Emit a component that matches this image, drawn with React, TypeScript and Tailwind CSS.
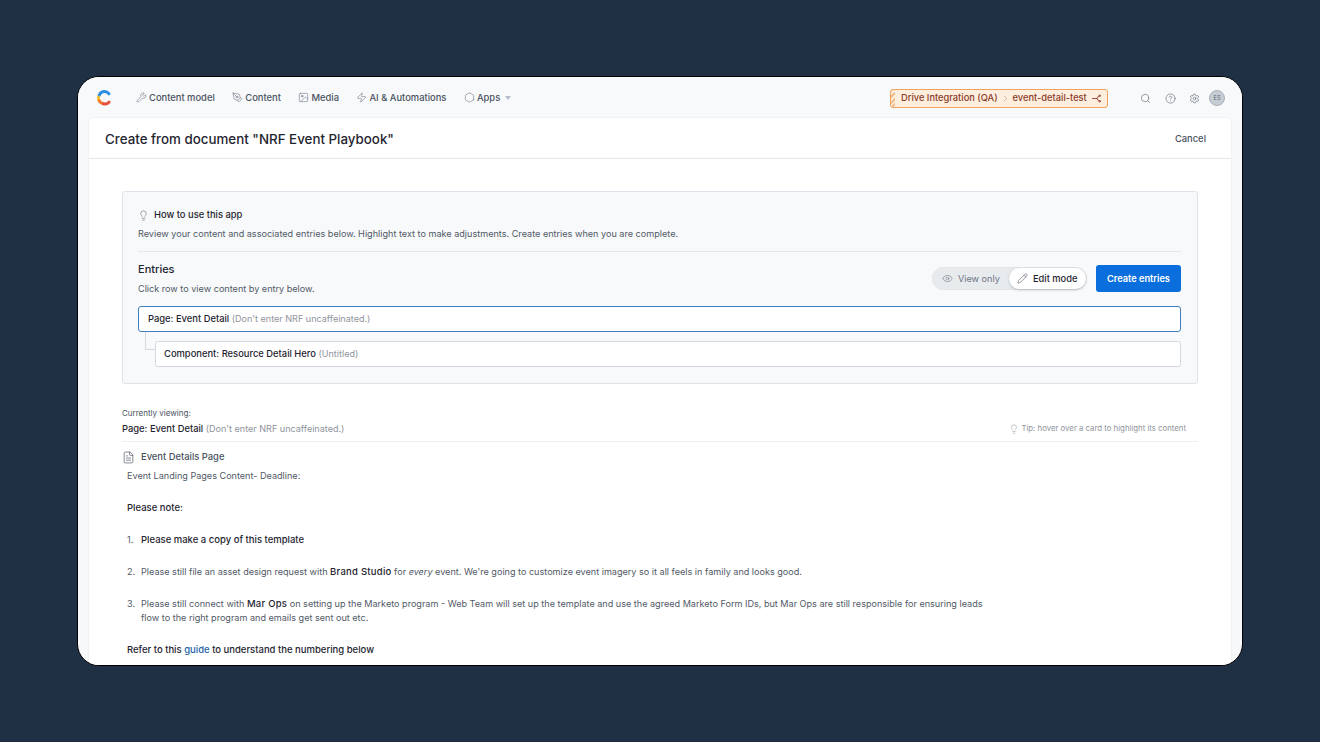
import { Search, CircleHelp, Settings, Eye, Pencil, Lightbulb, FileText, Wrench, PenTool, Image, Zap, Hexagon, ChevronRight } from 'lucide-react'

const NAV_ITEMS = [
  { label: 'Content model', icon: Wrench },
  { label: 'Content', icon: PenTool },
  { label: 'Media', icon: Image },
  { label: 'AI & Automations', icon: Zap },
  { label: 'Apps', icon: Hexagon },
]

function Logo() {
  return (
    <svg width="16" height="16" viewBox="0 0 16 16" fill="none" strokeWidth="3" strokeLinecap="round">
      <path d="M3.2 5.2A5.6 5.6 0 0 0 3.2 10.8" stroke="#f6c42f" />
      <path d="M3.2 10.8A5.6 5.6 0 0 0 7.5 13.7" stroke="#ee7a35" />
      <path d="M7.5 13.7A5.6 5.6 0 0 0 13 12.2" stroke="#e8503f" />
      <path d="M3.4 4.9A5.6 5.6 0 0 1 13 3.8" stroke="#2f8fe0" />
    </svg>
  )
}

function BranchIcon() {
  return (
    <svg width="9" height="9" viewBox="0 0 9 9" fill="none" stroke="currentColor" strokeWidth="0.9" strokeLinecap="round">
      <path d="M0.5 4.5H5L6.5 2.2M5 4.5L6.5 6.8" />
      <circle cx="7.6" cy="1.8" r="0.7" />
      <circle cx="7.6" cy="7.2" r="0.7" />
    </svg>
  )
}

function TopBar() {
  return (
    <div className="h-[41px] shrink-0 flex items-center pt-[1px] pl-[18px] pr-[17px] bg-[#f7f9fa]">
      <Logo />
      <nav className="flex items-center ml-[24px] gap-[17.5px]">
        {NAV_ITEMS.map((item) => (
          <div key={item.label} className="flex items-center gap-[2px] text-[#4a5260]">
            <item.icon className="w-[11px] h-[11px] text-[#6b7483]" strokeWidth={1.25} />
            <span className="text-[9.4px] font-medium">{item.label}</span>
            {item.label === 'Apps' && (
              <span className="ml-[3px] w-0 h-0 border-x-[3px] border-x-transparent border-t-[4px] border-t-[#b5bdc9]" />
            )}
          </div>
        ))}
      </nav>
      <div className="ml-auto flex items-center">
        <div className="h-[19px] w-[218px] flex items-center rounded-[3px] border border-[#f1a25d] bg-[#fdeedd] pr-[6px] text-[#8c3a2a] text-[9.3px] font-medium mr-[32px] overflow-hidden">
          <span className="w-[4px] h-full mr-[6px] bg-[repeating-linear-gradient(135deg,#f5bd8b_0_2px,#fdeedd_2px_4px)]" />
          <span>Drive Integration (QA)</span>
          <ChevronRight className="w-[9px] h-[9px] mx-[3px] text-[#a8705a]" strokeWidth={1.25} />
          <span>event-detail-test</span>
          <span className="ml-auto">
            <BranchIcon />
          </span>
        </div>
        <Search className="w-[11px] h-[11px] text-[#555d6b]" strokeWidth={1.25} />
        <CircleHelp className="w-[11px] h-[11px] text-[#555d6b] ml-[14px]" strokeWidth={1.25} />
        <Settings className="w-[11px] h-[11px] text-[#555d6b] ml-[13px]" strokeWidth={1.25} />
        <div className="ml-[9px] w-[16px] h-[16px] rounded-full bg-[#c6ccd4] border border-[#a9b1bc] flex items-center justify-center text-[5.5px] text-[#5d6878]">
          ES
        </div>
      </div>
    </div>
  )
}

function EntryLabel({ name, title }: { name: string; title: string }) {
  return (
    <span className="text-[9.4px] font-medium text-[#1f2530]">
      {name} <span className="text-[9.05px] font-normal text-[#8f949c]">({title})</span>
    </span>
  )
}

function HowToPanel() {
  return (
    <div className="h-[193px] border border-[#dfe3e9] rounded-[3px] bg-[#f7f9fa] pt-[16px] pl-[15px] pr-[16px]">
      <div className="flex items-center h-[14px] gap-[5px] text-[9.4px] font-medium text-[#1f2530]">
        <Lightbulb className="w-[11px] h-[11px] text-[#5d6570]" strokeWidth={1.25} />
        <span>How to use this app</span>
      </div>
      <p className="mt-[5px] h-[14px] leading-[14px] text-[9.1px] text-[#525a66]">
        Review your content and associated entries below. Highlight text to make adjustments. Create entries when you are complete.
      </p>
      <div className="mt-[10px] border-t border-[#e3e6ea]" />
      <div className="flex items-start justify-between mt-[9px]">
        <div>
          <div className="text-[11px] leading-[16px] font-medium text-[#1f2530]">Entries</div>
          <div className="mt-[5px] text-[9.1px] leading-[14px] text-[#525a66]">Click row to view content by entry below.</div>
        </div>
        <div className="flex items-center gap-[9px] mt-[4px]">
          <div className="h-[23px] w-[155px] flex items-center rounded-full bg-[#e8ebee] border border-[#e1e4e8]">
            <div className="flex items-center gap-[5px] pl-[9px] text-[9.1px] text-[#6b7483] w-[76px]">
              <Eye className="w-[11px] h-[11px]" strokeWidth={1.25} />
              View only
            </div>
            <div className="h-[21px] flex-1 flex items-center gap-[5px] pl-[8px] rounded-full bg-white shadow-[0_1px_3px_rgba(0,0,0,0.2)] text-[9.3px] font-medium text-[#1f2530]">
              <Pencil className="w-[11px] h-[11px] text-[#4a5260]" strokeWidth={1.25} />
              Edit mode
            </div>
          </div>
          <button className="h-[27px] w-[85px] rounded-[3px] bg-[#0a6fdc] text-white text-[9.2px] font-semibold">
            Create entries
          </button>
        </div>
      </div>
      <div className="mt-[10px] h-[26px] flex items-center pt-[1px] px-[9px] rounded-[3px] bg-white border-[1.5px] border-[#3f7fc0]">
        <EntryLabel name="Page: Event Detail" title="Don't enter NRF uncaffeinated." />
      </div>
      <div className="flex mt-[9px]">
        <div className="w-[10px] h-[18px] -mt-[9px] ml-[7px] border-l border-b border-[#d5d9df] shrink-0" />
        <div className="flex-1 h-[26px] flex items-center pt-[1px] px-[8px] rounded-[3px] bg-white border border-[#d5d9df]">
          <EntryLabel name="Component: Resource Detail Hero" title="Untitled" />
        </div>
      </div>
    </div>
  )
}

function DocumentBody() {
  return (
    <div className="pl-[5px] text-[9.08px] leading-[14px] text-[#525a66] w-[870px]">
      <p className="mt-[5px]">Event Landing Pages Content- Deadline:</p>
      <p className="mt-[18px] text-[9.5px] font-medium text-[#1f2530]">Please note:</p>
      <ol className="mt-[18px]">
        <li className="flex">
          <span className="w-[14px] shrink-0">1.</span>
          <span className="text-[9.5px] font-medium text-[#1f2530]">Please make a copy of this template</span>
        </li>
        <li className="flex mt-[18px]">
          <span className="w-[14px] shrink-0">2.</span>
          <span>
            Please still file an asset design request with <b className="text-[9.5px] tracking-[0.25px] font-medium text-[#1f2530]">Brand Studio</b> for <i>every</i> event. We're going to customize event imagery so it all feels in family and looks good.
          </span>
        </li>
        <li className="flex mt-[18px]">
          <span className="w-[14px] shrink-0">3.</span>
          <span>
            Please still connect with <b className="text-[9.5px] tracking-[0.25px] font-medium text-[#1f2530]">Mar Ops</b> on setting up the Marketo program - Web Team will set up the template and use the agreed Marketo Form IDs, but Mar Ops are still responsible for ensuring leads flow to the right program and emails get sent out etc.
          </span>
        </li>
      </ol>
      <p className="mt-[18px] text-[9.5px] font-medium text-[#1f2530]">
        Refer to this <span className="text-[#1c5fa8]">guide</span> to understand the numbering below
      </p>
    </div>
  )
}

export default function App() {
  return (
    <div className="w-[1320px] h-[742px] bg-[#1f3044] pt-[76px] pl-[77px] font-['Inter',sans-serif]">
      <div className="w-[1166px] h-[590px] rounded-[22px] overflow-hidden bg-[#f7f9fa] border border-black flex flex-col">
        <TopBar />
        <div className="flex-1 mx-[11px] bg-white rounded-t-[4px] shadow-[0_0_3px_rgba(0,0,0,0.08)] overflow-hidden">
          <div className="h-[41px] flex items-center justify-between pt-[2px] pl-[16px] pr-[25px] border-b border-[#e3e6ea]">
            <h1 className="text-[13.35px] font-medium text-[#1f2530]">Create from document "NRF Event Playbook"</h1>
            <span className="mt-[1px] text-[9.4px] font-medium text-[#4a5260]">Cancel</span>
          </div>
          <div className="pt-[32px] px-[33px]">
            <HowToPanel />
            <div className="mt-[23px] text-[8px] leading-[12px] text-[#4a5260]">Currently viewing:</div>
            <div className="mt-[3px] flex items-center justify-between pr-[12px] pb-[5px] border-b border-[#eef0f3]">
              <EntryLabel name="Page: Event Detail" title="Don't enter NRF uncaffeinated." />
              <div className="flex items-center gap-[2px] text-[7.8px] text-[#8f949c]">
                <Lightbulb className="w-[10px] h-[10px]" strokeWidth={1.25} />
                Tip: hover over a card to highlight its content
              </div>
            </div>
            <div className="mt-[8px] flex items-center gap-[6px] text-[9.4px] leading-[14px] font-medium text-[#4a5260]">
              <FileText className="w-[13px] h-[13px]" strokeWidth={1.25} />
              Event Details Page
            </div>
            <DocumentBody />
          </div>
        </div>
      </div>
    </div>
  )
}
